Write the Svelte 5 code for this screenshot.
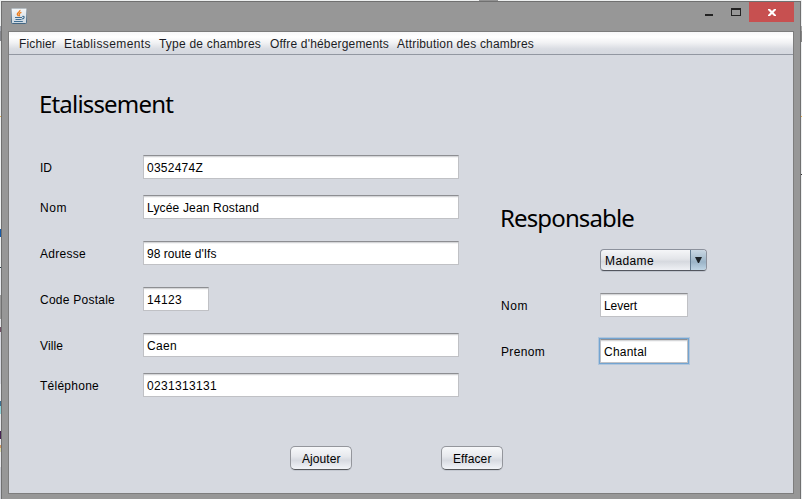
<script>
  const menus = [
    { text: 'Fichier', width: 37 },
    { text: 'Etablissements', width: 87 },
    { text: 'Type de chambres', width: 102 },
    { text: "Offre d'hébergements", width: 119 },
    { text: 'Attribution des chambres', width: 137 }
  ];

  const rows = [
    { label: 'ID', lw: 12, value: '0352474Z', vw: 56, width: 316, gap: 0 },
    { label: 'Nom', lw: 27, value: 'Lycée Jean Rostand', vw: 112, width: 316, gap: 16 },
    { label: 'Adresse', lw: 46, value: "98 route d'Ifs", vw: 69.5, width: 316, gap: 22 },
    { label: 'Code Postale', lw: 75, value: '14123', vw: 35, width: 66, gap: 22 },
    { label: 'Ville', lw: 23, value: 'Caen', vw: 30, width: 316, gap: 22 },
    { label: 'Téléphone', lw: 59, value: '0231313131', vw: 70, width: 316, gap: 16 }
  ];

  // Spreads the letters so that the label takes the given advance width.
  function fit(node, width) {
    const natural = node.getBoundingClientRect().width;
    const n = node.textContent.length;
    node.style.letterSpacing = `${(width - natural) / n}px`;
  }
</script>

<div class="desktop">
  <div class="edge left"></div>
  <div class="window">
    <header>
      <svg class="java" width="16" height="16" viewBox="0 0 16 16">
        <defs>
          <linearGradient id="tile" x1="0" y1="0" x2="0" y2="1">
            <stop offset="0" stop-color="#f5f7f8" />
            <stop offset="1" stop-color="#cbd6df" />
          </linearGradient>
          <linearGradient id="rim" x1="0" y1="0" x2="0" y2="1">
            <stop offset="0" stop-color="#b5bdc3" />
            <stop offset="1" stop-color="#426581" />
          </linearGradient>
        </defs>
        <rect x=".5" y=".5" width="15" height="15" rx="1" fill="url(#tile)" stroke="url(#rim)" />
        <path d="M8.9 2C9.5 4 5.8 4.4 6.3 6.3c.2.8.9 1.3 1.3 1.8M10.4 4.3C8.2 5.1 7.6 5.8 8.3 6.7c.5.7.2 1.2-.2 1.6" fill="none" stroke="#ed7d1c" stroke-width="1.3" />
        <path d="M4 9.5h7M4.5 11.5h6M3 13.5h8.8M11.3 8.5c2.7-.6 2.4 2-.4 2.5" fill="none" stroke="#416f93" stroke-width="1.1" />
      </svg>
      <div class="controls">
        <svg width="60" height="20" viewBox="0 0 60 20">
          <rect x="16" y="12" width="8" height="2" fill="#222" />
          <path d="M42 6h10v8H42zM43 8v5h8V8z" fill="#222" fill-rule="evenodd" />
        </svg>
        <div class="close">
          <svg width="45" height="20" viewBox="0 0 45 20">
            <path d="M19 7h2l2 2 2-2h2v1l-2.5 2.5L27 13v1h-2l-2-2-2 2h-2v-1l2.5-2.5L19 8z" fill="#fff" />
          </svg>
        </div>
      </div>
    </header>

    <div class="client">
      <nav>
        {#each menus as m}
          <span class="item"><span class="t" use:fit={m.width}>{m.text}</span></span>
        {/each}
      </nav>
      <main>
        <div class="columns">
          <section class="place">
            <h1><span class="t" use:fit={134}>Etalissement</span></h1>
            {#each rows as r}
              <div class="row" style:margin-top="{r.gap}px">
                <div class="label"><span class="t" use:fit={r.lw}>{r.label}</span></div>
                <div class="field" style:width="{r.width}px"><span class="t" use:fit={r.vw}>{r.value}</span></div>
              </div>
            {/each}
          </section>
          <section class="person">
            <h1><span class="t" use:fit={134}>Responsable</span></h1>
            <div class="select">
              <div class="choice"><span class="t" use:fit={49}>Madame</span></div>
              <div class="arrow">
                <svg width="7" height="6" viewBox="0 0 7 6"><path d="M0 0h7L4 6H3z" fill="#1d2328" /></svg>
              </div>
            </div>
            <div class="row first">
              <div class="label"><span class="t" use:fit={27}>Nom</span></div>
              <div class="field"><span class="t" use:fit={33}>Levert</span></div>
            </div>
            <div class="row second">
              <div class="label"><span class="t" use:fit={44}>Prenom</span></div>
              <div class="field focused"><span class="t" use:fit={43}>Chantal</span></div>
            </div>
          </section>
        </div>
        <div class="actions">
          <div class="button"><span class="t" use:fit={38.5}>Ajouter</span></div>
          <div class="button"><span class="t" use:fit={38.5}>Effacer</span></div>
        </div>
      </main>
    </div>
  </div>
  <div class="edge right"></div>
</div>

<style>
  :global(body) { overflow: hidden; }
  .desktop {
    width: 802px; height: 499px; display: flex; padding-top: 1px; box-sizing: border-box;
    background: linear-gradient(90deg, #eef0f0 479px, #929292 479px 498px, #eef0f0 498px) 0 0 / 802px 1px no-repeat, #eceeef;
    font: 12px/16px "Liberation Sans", Arial, sans-serif; color: #000; overflow: hidden;
  }
  .edge { width: 1px; height: 498px; flex: none; }
  .left {
    background: linear-gradient(#eef0f0 25px, #a5a8b0 25px 30px, #85878d 30px 40px, #eef0f0 40px 115px, #edb452 115px 116px, #f0f2f2 116px 228px, #175ba8 228px 236px, #eef0f0 236px 266px, #28424a 266px 267px, #e9ebef 267px 294px, #9b9b9b 294px 318px, #e4e5e8 318px 326px, #735166 326px 331px, #d8dae1 331px 383px, #e9ebef 383px 400px, #3d7092 400px 405px, #91d4d9 405px 413px, #e8e9ec 413px 430px, #472454 430px 438px, #e7e7ea 438px 444px, #d59b63 444px 447px, #dddcad 447px 451px, #e8e9ec 451px 466px, #cfd1d8 466px);
  }
  .right { background: linear-gradient(#eceeef 25px, #aaa 25px 30px, #858585 30px 41px, #eceeef 41px 115px, #edb452 115px 116px, #eceeef 116px 173px, #333 173px 174px, #eceeef 174px); }
  .window {
    width: 800px; height: 510px; box-sizing: border-box; flex: none; background: #979797;
    border: 1px solid #707070; border-bottom: 0; padding: 0 6px;
  }
  header { height: 29px; display: flex; align-items: flex-start; justify-content: space-between; }
  svg { display: block; }
  .java { margin: 6px 0 0 3px; }
  .controls { display: flex; }
  .close { width: 45px; height: 20px; background: #c75050; }
  .client { box-sizing: border-box; width: 786px; height: 463px; border: 1px solid #7d7d7d; background: #d6d9e0; }
  nav {
    height: 22px; display: flex; gap: 8px; padding-left: 10px; box-sizing: content-box;
    border-bottom: 1px solid #9297a1; background: linear-gradient(#f8f8f9 0, #fff 5px, #f0f1f3 11px, #d9dce2 17px, #d5d8df 22px);
    color: #1c1d24; align-items: center;
  }
  .item { height: 16px; padding-top: 2px; }
  .item:nth-child(4) { margin-left: 1px; }
  .t { display: inline-block; white-space: pre; }
  .columns { display: flex; padding-left: 31px; }
  .place { width: 461px; }
  h1 { margin: 0 0 0 -1px; font: 400 24px/32px "Noto Sans", "Open Sans", sans-serif; }
  .place h1 { padding-top: 33px; height: 67px; }
  .row { display: flex; height: 24px; }
  .label { width: 103px; padding-top: 5px; box-sizing: border-box; flex: none; }
  .field {
    box-sizing: border-box; height: 24px; border: 1px solid #c0c1c5; border-top-color: #8d8e92;
    background: linear-gradient(#d5d6d8 0 1px, #f4f4f5 1px 2px, #fff 2px); padding: 4px 0 0 3px;
  }
  .person h1 { padding-top: 147px; height: 47px; }
  .select {
    box-sizing: border-box; width: 107px; height: 22px; margin-left: 99px; display: flex; border-radius: 4px;
    border: 1px solid #8c919c; border-bottom-color: #53565e; overflow: hidden;
    background: linear-gradient(#f5f6f8, #e3e5e9 45%, #d6d9df 58%, #eff1f5); box-shadow: 0 1px 0 #bfc4cd;
  }
  .choice { width: 89px; padding: 3px 0 0 4px; box-sizing: border-box; }
  .arrow {
    box-sizing: border-box; width: 16px; border-left: 1px solid #647d93; padding: 7px 0 0 4px;
    background: linear-gradient(#c9d7e3, #a7bdce 45%, #9bb4c8 60%, #bfd5e5);
  }
  .person .label { width: 99px; }
  .person .field { width: 88px; }
  .first { margin-top: 22px; }
  .second { margin-top: 22px; }
  .focused { box-shadow: 0 0 0 1px #73a4d1, 0 0 0 2px #b1c6dc; }
  .actions { display: flex; gap: 89px; padding: 49px 0 0 281px; }
  .button {
    box-sizing: border-box; width: 62px; height: 24px; border: 1px solid #94969c; border-bottom-color: #55575b;
    border-radius: 5px; padding: 4px 0 0 11px; background: linear-gradient(#f7f8fa, #e7e9ed 42%, #d7dae1 60%, #f2f4f8);
    box-shadow: 0 1px 0 #c4c8d0;
  }
</style>
